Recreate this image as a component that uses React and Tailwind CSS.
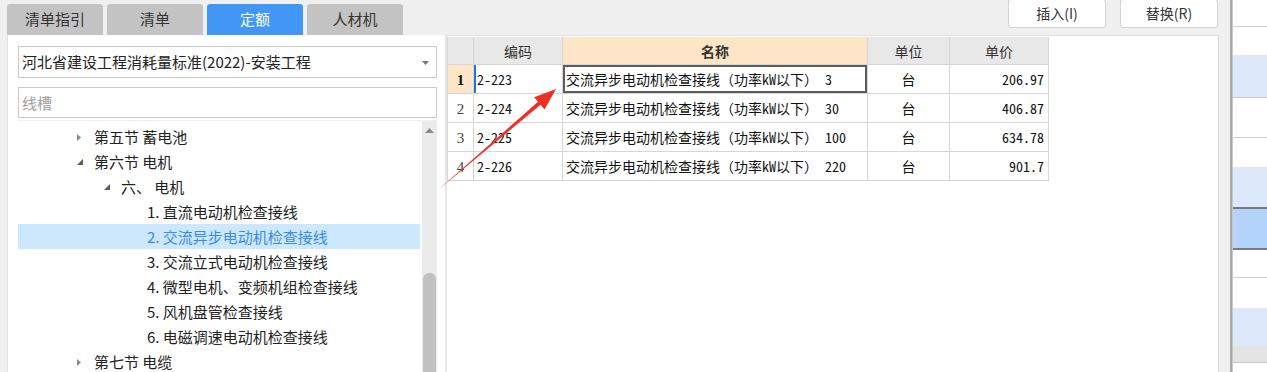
import React from 'react';

const tabs = ['清单指引', '清单', '定额', '人材机'];

const tree = [
  { label: '第五节 蓄电池', level: 0, arrow: 'closed' },
  { label: '第六节 电机', level: 0, arrow: 'open' },
  { label: '六、 电机', level: 1, arrow: 'open' },
  { label: '1. 直流电动机检查接线', level: 2 },
  { label: '2. 交流异步电动机检查接线', level: 2, selected: true },
  { label: '3. 交流立式电动机检查接线', level: 2 },
  { label: '4. 微型电机、变频机组检查接线', level: 2 },
  { label: '5. 风机盘管检查接线', level: 2 },
  { label: '6. 电磁调速电动机检查接线', level: 2 },
  { label: '第七节 电缆', level: 0, arrow: 'closed' },
];

const rows = [
  { no: '1', code: '2-223', name: '交流异步电动机检查接线（功率kW以下） 3', unit: '台', price: '206.97' },
  { no: '2', code: '2-224', name: '交流异步电动机检查接线（功率kW以下） 30', unit: '台', price: '406.87' },
  { no: '3', code: '2-225', name: '交流异步电动机检查接线（功率kW以下） 100', unit: '台', price: '634.78' },
  { no: '4', code: '2-226', name: '交流异步电动机检查接线（功率kW以下） 220', unit: '台', price: '901.7' },
];

// 右侧被截断的列表
const side = [
  'h-[27px] bg-white border-b border-[#d0d0d0]',
  'h-[28px] bg-white',
  'h-[43px] bg-[#dde8fb] border-b border-[#c8c8c8]',
  'h-[40px] bg-white border-b border-[#d0d0d0]',
  'h-[29px] bg-white',
  'h-[42px] bg-[#dde8fb] border-b-2 border-[#7a7a7a]',
  'h-[41px] bg-[#b4d4fc] border-b-2 border-[#7a7a7a]',
  'h-[28px] bg-white border-b border-[#d0d0d0]',
  'h-[30px] bg-white',
  'h-[38px] bg-[#dde8fb]',
  'h-[17px] bg-[#e4e4e4] border-b border-[#c8c8c8]',
  'h-[9px] bg-white',
];

function Arrow({ type }) {
  if (type === 'open') {
    return (
      <svg width="8" height="8" viewBox="0 0 8 8" className="block">
        <polygon points="7,1 7,7 1,7" fill="#5a5a5a" />
      </svg>
    );
  }
  return (
    <svg width="6" height="9" viewBox="0 0 6 9" className="block">
      <polygon points="1,1 5,4.5 1,8" fill="#8a8a8a" />
    </svg>
  );
}

export default function App() {
  return (
    <div className="relative w-[1267px] h-[372px] overflow-hidden bg-[#f0f0f0] flex font-['Noto_Sans_CJK_SC',sans-serif] text-[#333]">
      {/* 主区域 */}
      <div className="w-[1230px] flex flex-col">
        {/* 顶部：标签 + 按钮 */}
        <div className="h-[35px] shrink-0 flex items-end pl-[7px]">
          <div className="flex gap-[4px]">
            {tabs.map((t) => (
              <div
                key={t}
                className={
                  t === '定额'
                    ? 'w-[96px] h-[31px] rounded-t-[3px] bg-[#4297f5] text-white text-[15px] flex items-center justify-center'
                    : 'w-[96px] h-[31px] rounded-t-[3px] bg-[#c3c3c3] text-[#333] text-[15px] flex items-center justify-center'
                }
              >
                {t}
              </div>
            ))}
          </div>
          <div className="ml-auto self-start flex gap-[14px] pr-[12px]">
            <button className="w-[98px] h-[29px] -mt-[1px] bg-white border border-[#d2d2d2] rounded-[3px] text-[14px] text-[#333]">插入(I)</button>
            <button className="w-[98px] h-[29px] -mt-[1px] bg-white border border-[#d2d2d2] rounded-[3px] text-[14px] text-[#333]">替换(R)</button>
          </div>
        </div>

        {/* 下部：左侧树 + 右侧表格 */}
        <div className="flex-1 min-h-0 flex">
          {/* 左侧面板 */}
          <div className="ml-[7px] w-[438px] overflow-hidden bg-white border-l border-[#e2e2e2] flex flex-col pl-[10px] pr-[8px]">
            <div className="mt-[11px] shrink-0 h-[32px] border border-[#c9c9c9] flex items-center pl-[3px] pr-[7px] pt-[1px]">
              <span className="text-[15px] text-[#222]">河北省建设工程消耗量标准(2022)-安装工程</span>
              <svg width="7" height="4" viewBox="0 0 7 4" className="ml-auto">
                <polygon points="0,0 7,0 3.5,4" fill="#777" />
              </svg>
            </div>
            <div className="mt-[9px] shrink-0 h-[31px] border border-[#c9c9c9] flex items-center pl-[3px] pt-[1px]">
              <span className="text-[15px] text-[#a0a0a0]">线槽</span>
            </div>
            <div className="mt-[2px] flex-1 flex border-t border-[#efefef] min-h-0">
              <div className="w-[402px] pt-[3px]">
                {tree.map((n) => (
                  <div
                    key={n.label}
                    className={
                      'h-[25px] pt-[1px] flex items-center text-[15px] whitespace-nowrap ' +
                      (n.selected ? 'bg-[#cce8ff] text-[#3a8ae6] ' : 'text-[#222] ') +
                      (n.level === 0 ? 'pl-[58px]' : n.level === 1 ? 'pl-[85px]' : 'pl-[129px]')
                    }
                  >
                    {n.arrow && (
                      <span className="w-[18px] flex items-center">
                        <Arrow type={n.arrow} />
                      </span>
                    )}
                    <span>{n.label}</span>
                  </div>
                ))}
              </div>
              {/* 滚动条 */}
              <div className="ml-[2px] w-[15px] bg-[#ebebeb] flex flex-col">
                <div className="h-[18px] flex items-center justify-center">
                  <svg width="9" height="5" viewBox="0 0 9 5">
                    <polygon points="0,5 9,5 4.5,0" fill="#8c8c8c" />
                  </svg>
                </div>
                <div className="h-[134px]" />
                <div className="flex-1 mx-[1px] rounded-t-[6px] bg-[#c1c1c1]" />
              </div>
            </div>
          </div>

          {/* 表格面板 */}
          <div className="w-[774px] bg-white border-l-2 border-[#e6e6e6] border-r border-t border-r-[#d8d8d8] border-t-[#e2e2e2] pt-[1px]">
            <div className="w-[602px] border-l border-[#d6d6d6]">
              <div className="grid grid-cols-[26px_89px_305px_82px_99px] h-[28px] text-[14px]">
                <div className="bg-[#e8e8e8] border-r border-b border-[#d6d6d6]" />
                <div className="bg-[#e8e8e8] border-r border-b border-[#d6d6d6] flex items-center justify-center pt-[1px]">编码</div>
                <div className="bg-[#fde5c6] border-r border-b border-[#d6d6d6] flex items-center justify-center pt-[1px] font-bold">名称</div>
                <div className="bg-[#e8e8e8] border-r border-b border-[#d6d6d6] flex items-center justify-center pt-[1px]">单位</div>
                <div className="bg-[#e8e8e8] border-r border-b border-[#d6d6d6] flex items-center justify-center pt-[1px]">单价</div>
              </div>
              {rows.map((r, i) => (
                <div
                  key={r.no}
                  className="grid grid-cols-[26px_89px_305px_82px_99px] h-[29px] text-[14px] text-[#111] font-['Noto_Sans_Mono_CJK_SC','Noto_Sans_CJK_SC',monospace]"
                >
                  <div
                    className={
                      i === 0
                        ? "bg-[#fde5c6] border-r border-b border-[#d6d6d6] flex items-center justify-center pt-[2px] font-['Liberation_Serif',serif] font-bold text-[15px]"
                        : "bg-white border-r border-b border-[#d6d6d6] flex items-center justify-center pt-[2px] font-['Liberation_Serif',serif] text-[15px] text-[#444]"
                    }
                  >
                    {r.no}
                  </div>
                  <div
                    className={
                      i === 0
                        ? 'border-r border-b border-[#d6d6d6] flex items-center pl-[3px] pt-[1px] shadow-[inset_2px_0_0_#1a73e8]'
                        : 'border-r border-b border-[#d6d6d6] flex items-center pl-[3px] pt-[1px]'
                    }
                  >
                    {r.code}
                  </div>
                  <div
                    className={
                      i === 0
                        ? 'border-r border-b border-[#d6d6d6] flex items-center pl-[3px] pt-[1px] whitespace-nowrap shadow-[inset_0_0_0_2px_#5c5c5c]'
                        : 'border-r border-b border-[#d6d6d6] flex items-center pl-[3px] pt-[1px] whitespace-nowrap'
                    }
                  >
                    {r.name}
                  </div>
                  <div className="border-r border-b border-[#d6d6d6] flex items-center justify-center pt-[1px]">{r.unit}</div>
                  <div className="border-r border-b border-[#d6d6d6] flex items-center justify-end pr-[4px] pt-[1px]">{r.price}</div>
                </div>
              ))}
            </div>
          </div>
        </div>
      </div>

      {/* 分隔线 */}
      <div className="w-[2px] bg-[#a8a8a8]" />

      {/* 右侧截断列表 */}
      <div className="flex-1 flex flex-col border-l border-[#c8c8c8]">
        {side.map((c, i) => (
          <div key={i} className={c} />
        ))}
      </div>

      {/* 红色标注箭头 */}
      <svg className="absolute inset-0 pointer-events-none" width="1267" height="372" viewBox="0 0 1267 372">
        <polygon
          points="438,190 538,101.8 534.1,97.2 556,89 544.5,109.4 540.6,104.8"
          fill="#ee2f24"
        />
      </svg>
    </div>
  );
}
